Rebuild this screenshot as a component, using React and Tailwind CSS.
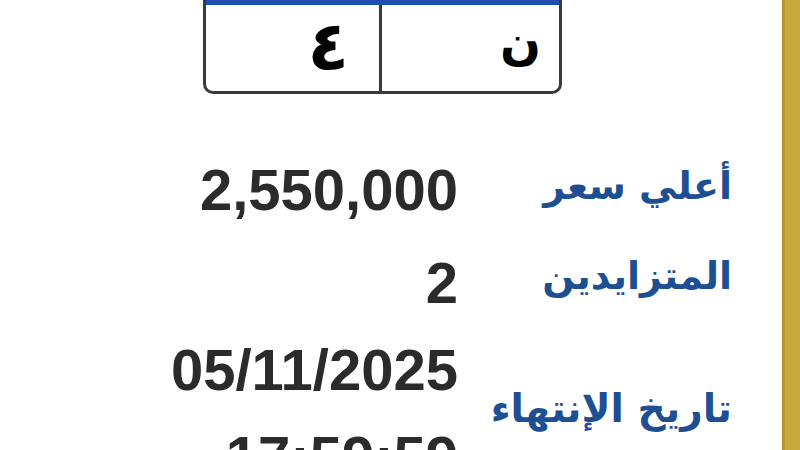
export default function App() {
  return (
    <div className="w-[800px] h-[450px] overflow-hidden bg-white flex">
      <div className="flex-1">
        {/* plate */}
        <div className="ml-[203px] w-[359px] h-[94px] border-x-[3px] border-b-[3px] border-[#3a3a3a] rounded-b-[10px] flex flex-col overflow-hidden font-['DejaVu_Sans'] font-bold text-black">
          <div className="h-[5px] bg-[#1f4fae] shrink-0"></div>
          <div className="flex-1 flex">
            <div className="w-[176px] border-r-[3px] border-[#3a3a3a] flex items-center justify-end pr-[30px] pb-[2px]">
              <span className="text-[68px] leading-none">٤</span>
            </div>
            <div className="flex-1 flex items-center justify-end pr-[18px] pb-[12px]">
              <span className="text-[48px] leading-none">ن</span>
            </div>
          </div>
        </div>
        {/* info */}
        <div dir="rtl" className="mt-[52px] pr-[50px] grid grid-cols-[250px_auto] gap-x-[24px]">
          <div className="h-[93px] flex items-center pb-[12px] text-[#1d4f91] font-bold text-[38px] font-['DejaVu_Sans'] whitespace-nowrap">أعلي سعر</div>
          <div dir="ltr" className="h-[93px] text-right text-[58px] leading-[87px] text-[#2b2b2b] font-bold font-['Liberation_Sans']">2,550,000</div>
          <div className="h-[87px] flex items-center pb-[12px] text-[#1d4f91] font-bold text-[38px] font-['DejaVu_Sans'] whitespace-nowrap">المتزايدين</div>
          <div dir="ltr" className="h-[87px] text-right text-[58px] leading-[87px] text-[#2b2b2b] font-bold font-['Liberation_Sans']">2</div>
          <div className="h-[174px] flex items-center pb-[8px] text-[#1d4f91] font-bold text-[39px] font-['DejaVu_Sans'] whitespace-nowrap">تاريخ الإنتهاء</div>
          <div dir="ltr" className="h-[174px] text-right text-[58px] leading-[87px] text-[#2b2b2b] font-bold font-['Liberation_Sans']">
            <div>05/11/2025</div>
            <div>17:59:59</div>
          </div>
        </div>
      </div>
      <div className="w-[18px] h-full bg-[#c9a83e] border-l-[3px] border-[#b8952c]"></div>
    </div>
  );
}
